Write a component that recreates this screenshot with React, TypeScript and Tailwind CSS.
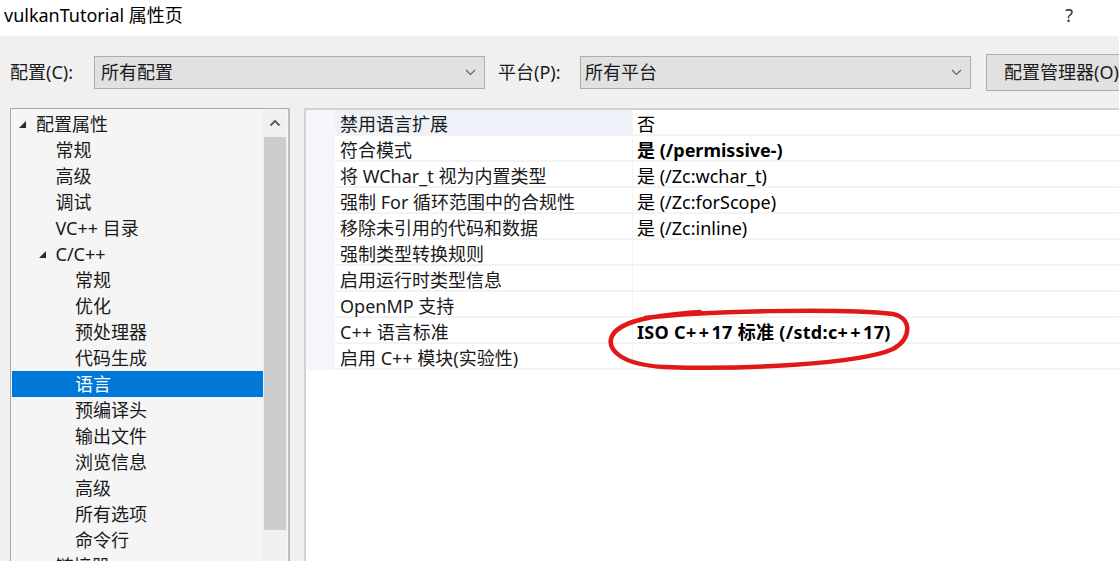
import React from "react";

const FONT = '"Noto Sans", "Noto Sans CJK SC", sans-serif';

const Chevron = () => (
  <svg width="11" height="7" viewBox="0 0 11 7" fill="none">
    <path d="M1 1 L5.5 5.5 L10 1" stroke="#606060" strokeWidth="1.1" />
  </svg>
);

const Tri = () => (
  <svg width="9" height="9" viewBox="0 0 9 9">
    <path d="M8 1 L8 8 L1 8 Z" fill="#2b2b2b" />
  </svg>
);

type TreeItem = { label: string; level: number; expander?: boolean; selected?: boolean };

const tree: TreeItem[] = [
  { label: "配置属性", level: 0, expander: true },
  { label: "常规", level: 1 },
  { label: "高级", level: 1 },
  { label: "调试", level: 1 },
  { label: "VC++ 目录", level: 1 },
  { label: "C/C++", level: 1, expander: true },
  { label: "常规", level: 2 },
  { label: "优化", level: 2 },
  { label: "预处理器", level: 2 },
  { label: "代码生成", level: 2 },
  { label: "语言", level: 2, selected: true },
  { label: "预编译头", level: 2 },
  { label: "输出文件", level: 2 },
  { label: "浏览信息", level: 2 },
  { label: "高级", level: 2 },
  { label: "所有选项", level: 2 },
  { label: "命令行", level: 2 },
  { label: "链接器", level: 1, expander: true },
];

const rows: { name: string; value: string; bold?: boolean }[] = [
  { name: "禁用语言扩展", value: "否" },
  { name: "符合模式", value: "是 (/permissive-)", bold: true },
  { name: "将 WChar_t 视为内置类型", value: "是 (/Zc:wchar_t)" },
  { name: "强制 For 循环范围中的合规性", value: "是 (/Zc:forScope)" },
  { name: "移除未引用的代码和数据", value: "是 (/Zc:inline)" },
  { name: "强制类型转换规则", value: "" },
  { name: "启用运行时类型信息", value: "" },
  { name: "OpenMP 支持", value: "" },
  { name: "C++ 语言标准", value: "ISO C++17 标准 (/std:c++17)", bold: true },
  { name: "启用 C++ 模块(实验性)", value: "" },
];

export default function App() {
  return (
    <div
      className="relative w-[1119px] h-[561px] overflow-hidden bg-[#f0f0f0] text-[18px] text-[#1a1a1a] leading-none"
      style={{ fontFamily: FONT }}
    >
      {/* title bar */}
      <div className="h-[36px] bg-white flex items-center justify-between pl-[4px] pr-[46px] pb-[6px]">
        <span className="text-[18px] text-black">vulkanTutorial 属性页</span>
        <span className="text-[18px] text-[#333]">?</span>
      </div>

      {/* toolbar */}
      <div className="h-[72px] flex items-center">
        <span className="ml-[10px] w-[84px] shrink-0">配置(C):</span>
        <div className="shrink-0 w-[391px] h-[33px] bg-[#e1e1e1] border border-[#adadad] flex items-center justify-between pl-[6px] pr-[8px]">
          <span>所有配置</span>
          <Chevron />
        </div>
        <span className="shrink-0 ml-[13px] w-[82px]">平台(P):</span>
        <div className="shrink-0 w-[391px] h-[33px] bg-[#e1e1e1] border border-[#adadad] flex items-center justify-between pl-[4px] pr-[8px]">
          <span>所有平台</span>
          <Chevron />
        </div>
        <div className="shrink-0 ml-[15px] w-[150px] h-[37px] bg-[#e1e1e1] border border-[#adadad] flex items-center pl-[17px] whitespace-nowrap">
          配置管理器(O)...
        </div>
      </div>

      {/* body */}
      <div className="flex h-[453px]">
        {/* tree panel */}
        <div className="shrink-0 ml-[10px] w-[280px] h-[460px] border-l border-t border-[#a9a9a9] border-r-2 border-r-[#b9bdc4] bg-[#f5f5f5] flex">
          <div className="flex-1 pt-[2px] pl-[1px]">
            {tree.map((t, i) => (
              <div
                key={i}
                className={
                  "h-[26px] flex items-center " +
                  (t.selected ? "bg-[#0078d7] text-white" : "")
                }
                style={{ paddingLeft: 6 + t.level * 19.5 }}
              >
                <span className="w-[18px] flex items-center">{t.expander ? <Tri /> : null}</span>
                <span className="whitespace-nowrap">{t.label}</span>
              </div>
            ))}
          </div>
          <div className="w-[24px] bg-[#f0f0f0] flex flex-col mr-[1px]">
            <div className="h-[28px] flex items-center justify-center">
              <svg width="12" height="8" viewBox="0 0 12 8" fill="none">
                <path d="M1.5 6.5 L6 2 L10.5 6.5" stroke="#606060" strokeWidth="2" />
              </svg>
            </div>
            <div className="h-[393px] bg-[#cdcdcd] mx-[1px]" />
          </div>
        </div>

        {/* property grid */}
        <div className="ml-[14px] flex-1 border-l-2 border-t-2 border-[#d2d2d2] bg-white">
          {rows.map((r, i) => (
            <div key={i} className="h-[26px] flex">
              <div className="w-[29px] bg-[#f4f6fa]" />
              <div
                className={
                  "w-[298px] flex items-center pl-[5px] pt-[3px] border-b-2 border-r border-[#f3f3f3] whitespace-nowrap " +
                  (i === 0 ? "bg-[#eef2f8]" : "")
                }
              >
                {r.name}
              </div>
              <div
                className={
                  "flex-1 flex items-center pl-[4px] pt-[3px] border-b-2 border-[#f3f3f3] whitespace-nowrap text-black " +
                  (r.bold ? "font-bold" : "")
                }
              >
                {r.bold && r.value.startsWith("ISO") ? (
                  <span className="tracking-[0.3px]">
                    ISO C<span className="tracking-[2.5px]">++</span>17 标准 (/std:c<span className="tracking-[2.5px]">++</span>17)
                  </span>
                ) : (
                  r.value
                )}
              </div>
            </div>
          ))}
        </div>
      </div>

      {/* red hand-drawn loop */}
      <svg
        className="absolute left-0 top-0 pointer-events-none"
        width="1119"
        height="561"
        viewBox="0 0 1119 561"
        fill="none"
      >
        <path
          d="M645 318 C 700 311, 840 308, 893 314 C 912 318, 912 338, 893 349 C 860 364, 740 370, 665 367 C 622 365, 606 350, 612 336 C 618 324, 640 316, 700 312"
          stroke="#e01818"
          strokeWidth="4.5"
          strokeLinecap="round"
        />
      </svg>
    </div>
  );
}
